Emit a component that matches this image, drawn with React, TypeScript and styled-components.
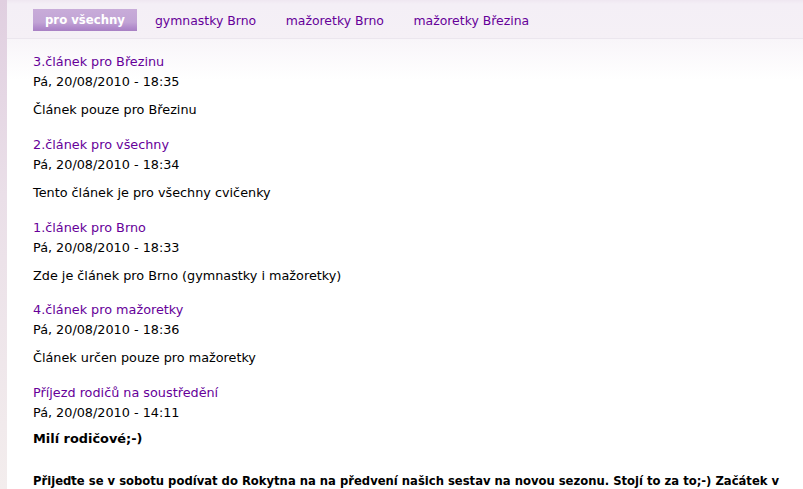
import React from "react";
import styled, { createGlobalStyle } from "styled-components";

const Global = createGlobalStyle`
  html, body { margin: 0; padding: 0; background: #fff; }
  body { font-family: "DejaVu Sans", Verdana, sans-serif; font-size: 12.8px; color: #000; }
`;

const Page = styled.div`
  display: flex;
  height: 489px;
  overflow: hidden;
`;

const SideStrip = styled.div`
  width: 7px;
  flex: none;
  background: linear-gradient(to bottom, #e0cfe0 0%, #eadfe8 40%, #f3eded 100%);
`;

const Main = styled.div`
  flex: 1;
  min-width: 0;
  display: flex;
  flex-direction: column;
  background: linear-gradient(to bottom, #f8f5f9 39px, #ffffff 80px);
`;

const TabBar = styled.nav`
  height: 39px;
  flex: none;
  box-sizing: border-box;
  border-bottom: 1px solid #ebe6ee;
  background: linear-gradient(to bottom, #efe7f1 0px, #f4eff6 4px, #f5f0f6 100%);
  display: flex;
  align-items: flex-start;
  gap: 5px;
  padding: 9px 0 0 26px;
`;

const Tab = styled.a<{ $active?: boolean }>`
  display: block;
  height: 22px;
  line-height: 23px;
  padding: 0 12px;
  margin-right: ${(p) => (p.$active ? "1px" : "0.5px")};
  font-size: ${(p) => (p.$active ? "11.7px" : "12.45px")};
  text-decoration: none;
  white-space: nowrap;
  color: ${(p) => (p.$active ? "#ffffff" : "#660099")};
  font-weight: ${(p) => (p.$active ? "bold" : "normal")};
  background: ${(p) =>
    p.$active
      ? "linear-gradient(to bottom, #c8acd9 0%, #c2a4d5 60%, #b18bcb 85%, #a880c3 100%)"
      : "transparent"};
`;

const Content = styled.main`
  padding: 13px 6px 0 26px;
`;

const Article = styled.article`
  margin-bottom: 14.75px;
`;

const Title = styled.a`
  display: block;
  line-height: 20px;
  color: #660099;
  text-decoration: none;
`;

const Meta = styled.div`
  line-height: 20px;
  color: #000;
`;

const Body = styled.p`
  margin: 8px 0 0;
  line-height: 20px;
`;

const Greeting = styled.p`
  margin: 6px 0 0;
  line-height: 20px;
  font-weight: bold;
  font-size: 12.9px;
`;

const Announcement = styled.p`
  margin: 22px 0 0;
  line-height: 20px;
  font-weight: bold;
  font-size: 11.6px;
`;

const articles = [
  { title: "3.článek pro Březinu", date: "Pá, 20/08/2010 - 18:35", body: "Článek pouze pro Březinu" },
  { title: "2.článek pro všechny", date: "Pá, 20/08/2010 - 18:34", body: "Tento článek je pro všechny cvičenky" },
  { title: "1.článek pro Brno", date: "Pá, 20/08/2010 - 18:33", body: "Zde je článek pro Brno (gymnastky i mažoretky)" },
  { title: "4.článek pro mažoretky", date: "Pá, 20/08/2010 - 18:36", body: "Článek určen pouze pro mažoretky" },
];

export default function App() {
  return (
    <>
      <Global />
      <Page>
        <SideStrip />
        <Main>
          <TabBar>
            <Tab $active>pro všechny</Tab>
            <Tab>gymnastky Brno</Tab>
            <Tab>mažoretky Brno</Tab>
            <Tab>mažoretky Březina</Tab>
          </TabBar>
          <Content>
            {articles.map((a) => (
              <Article key={a.title}>
                <Title>{a.title}</Title>
                <Meta>{a.date}</Meta>
                <Body>{a.body}</Body>
              </Article>
            ))}
            <Article>
              <Title>Příjezd rodičů na soustředění</Title>
              <Meta>Pá, 20/08/2010 - 14:11</Meta>
              <Greeting>Milí rodičové;-)</Greeting>
              <Announcement>
                Přijeďte se v sobotu podívat do Rokytna na na předvení našich sestav na novou sezonu. Stojí to za to;-) Začátek v 10:00 hodin.
              </Announcement>
            </Article>
          </Content>
        </Main>
      </Page>
    </>
  );
}
